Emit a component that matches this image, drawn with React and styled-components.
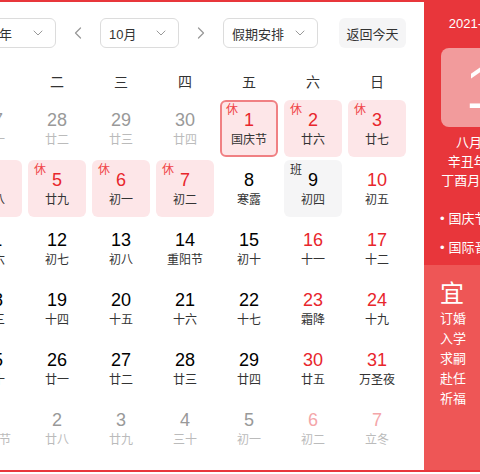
import React from 'react';
import styled, { createGlobalStyle } from 'styled-components';
import { ChevronDown, ChevronLeft, ChevronRight } from 'lucide-react';

const GlobalStyle = createGlobalStyle`
  html, body { margin: 0; padding: 0; background: #fff; }
  body { font-family: "Liberation Sans", "Noto Sans CJK SC", sans-serif; }
`;

const RED = '#e8363b';
const RED_LIGHT = '#ee5656';

const Viewport = styled.div`
  width: 480px;
  height: 474px;
  overflow: hidden;
  background: #fff;
`;

const Widget = styled.div`
  display: flex;
  width: max-content;
  margin-left: -56px;
  border: 2px solid ${RED};
  border-right: none;
  background: #fff;
`;

const Main = styled.div`
  width: 478px;
  height: 468px;
  box-sizing: border-box;
  padding: 16px 15px 0;
`;

const Header = styled.div`
  display: flex;
  align-items: center;
  height: 30px;
`;

const Select = styled.div`
  display: flex;
  align-items: center;
  justify-content: space-between;
  box-sizing: border-box;
  width: ${p => p.$w}px;
  height: 30px;
  padding: 0 9px 0 8px;
  border: 1px solid #dcdcdc;
  border-radius: 6px;
  font-size: 13px;
  color: #333;
  svg { color: #999; }
`;

const Arrow = styled.div`
  display: flex;
  align-items: center;
  justify-content: center;
  width: 44px;
  height: 30px;
  color: #999;
`;

const TodayButton = styled.div`
  margin-left: auto;
  margin-right: 3px;
  height: 30px;
  width: 67px;
  display: flex;
  align-items: center;
  justify-content: center;
  background: #f5f5f6;
  border-radius: 6px;
  font-size: 13px;
  color: #333;
`;

const Weekdays = styled.div`
  display: grid;
  grid-template-columns: repeat(7, 64px);
  margin-top: 18px;
  height: 30px;
  align-items: center;
  font-size: 14px;
  color: #333;
  text-align: center;
`;

const Grid = styled.div`
  display: grid;
  grid-template-columns: repeat(7, 58px);
  grid-auto-rows: 57px;
  column-gap: 6px;
  row-gap: 3px;
  padding: 0 3px;
  margin-top: 4px;
`;

const Cell = styled.div`
  position: relative;
  box-sizing: border-box;
  display: flex;
  flex-direction: column;
  align-items: center;
  padding-top: ${p => (p.$today ? 8 : 10)}px;
  border-radius: 6px;
  background: ${p => (p.$kind === 'rest' ? '#fde6e8' : p.$kind === 'work' ? '#f5f5f6' : 'transparent')};
  border: ${p => (p.$today ? '2px solid #f08083' : 'none')};
`;

const numColor = {
  normal: '#000',
  red: '#e8262c',
  prev: '#999',
  nextWe: '#f4a6a9',
};

const Num = styled.div`
  font-size: 18px;
  line-height: 20px;
  color: ${p => numColor[p.$tone]};
`;

const Lunar = styled.div`
  margin-top: 2px;
  font-size: 12px;
  line-height: 16px;
  color: ${p => (p.$faded ? '#bbb' : '#333')};
  white-space: nowrap;
`;

const Tag = styled.span`
  position: absolute;
  top: ${p => (p.$today ? 1 : 3)}px;
  left: ${p => (p.$today ? 4 : 6)}px;
  font-size: 12px;
  line-height: 14px;
  color: ${p => (p.$work ? '#333' : '#f04447')};
`;

const Side = styled.div`
  width: 116px;
  display: flex;
  flex-direction: column;
  color: #fff;
`;

const SideTop = styled.div`
  background: ${RED};
  height: 263px;
  padding-top: 13px;
  box-sizing: border-box;
  text-align: center;
  font-size: 13px;
`;

const DateLine = styled.div`
  line-height: 18px;
  font-size: 13px;
`;

const DayBox = styled.div`
  width: 82px;
  height: 79px;
  margin: 15px auto 6px;
  background: #f29b9c;
  border-radius: 8px;
  display: flex;
  align-items: center;
  justify-content: center;
  font-size: 60px;
  color: #fff;
`;

const InfoLine = styled.div`
  line-height: 19px;
  white-space: nowrap;
`;

const Festivals = styled.ul`
  list-style: none;
  margin: 14px 0 0;
  padding: 0 0 0 16px;
  text-align: left;
  li {
    line-height: 29px;
    white-space: nowrap;
  }
  li::before {
    content: '•';
    margin-right: 4px;
  }
`;

const SideBottom = styled.div`
  flex: 1;
  background: ${RED_LIGHT};
  padding: 14px 0 0 16px;
  display: flex;
  gap: 30px;
`;

const Almanac = styled.div`
  display: flex;
  flex-direction: column;
  font-size: 13px;
  line-height: 20px;
  b {
    font-size: 24px;
    font-weight: normal;
    line-height: 30px;
  }
`;

const rest = 'rest';
const cells = [
  { d: 27, l: '廿一', t: 'prev' }, { d: 28, l: '廿二', t: 'prev' }, { d: 29, l: '廿三', t: 'prev' },
  { d: 30, l: '廿四', t: 'prev' }, { d: 1, l: '国庆节', t: 'red', k: rest, today: true },
  { d: 2, l: '廿六', t: 'red', k: rest }, { d: 3, l: '廿七', t: 'red', k: rest },
  { d: 4, l: '廿八', t: 'red', k: rest }, { d: 5, l: '廿九', t: 'red', k: rest },
  { d: 6, l: '初一', t: 'red', k: rest }, { d: 7, l: '初二', t: 'red', k: rest },
  { d: 8, l: '寒露', t: 'normal' }, { d: 9, l: '初四', t: 'normal', k: 'work' }, { d: 10, l: '初五', t: 'red' },
  { d: 11, l: '初六', t: 'normal' }, { d: 12, l: '初七', t: 'normal' }, { d: 13, l: '初八', t: 'normal' },
  { d: 14, l: '重阳节', t: 'normal' }, { d: 15, l: '初十', t: 'normal' }, { d: 16, l: '十一', t: 'red' },
  { d: 17, l: '十二', t: 'red' },
  { d: 18, l: '十三', t: 'normal' }, { d: 19, l: '十四', t: 'normal' }, { d: 20, l: '十五', t: 'normal' },
  { d: 21, l: '十六', t: 'normal' }, { d: 22, l: '十七', t: 'normal' }, { d: 23, l: '霜降', t: 'red' },
  { d: 24, l: '十九', t: 'red' },
  { d: 25, l: '二十', t: 'normal' }, { d: 26, l: '廿一', t: 'normal' }, { d: 27, l: '廿二', t: 'normal' },
  { d: 28, l: '廿三', t: 'normal' }, { d: 29, l: '廿四', t: 'normal' }, { d: 30, l: '廿五', t: 'red' },
  { d: 31, l: '万圣夜', t: 'red' },
  { d: 1, l: '万圣节', t: 'prev' }, { d: 2, l: '廿八', t: 'prev' }, { d: 3, l: '廿九', t: 'prev' },
  { d: 4, l: '三十', t: 'prev' }, { d: 5, l: '初一', t: 'prev' }, { d: 6, l: '初二', t: 'nextWe' },
  { d: 7, l: '立冬', t: 'nextWe' },
];

const weekdays = ['一', '二', '三', '四', '五', '六', '日'];

export default function App() {
  return (
    <Viewport>
      <GlobalStyle />
      <Widget>
        <Main>
          <Header>
            <Select $w={95}>
              <span>2021年</span>
              <ChevronDown size={16} strokeWidth={1.5} />
            </Select>
            <Arrow><ChevronLeft size={20} strokeWidth={1.5} /></Arrow>
            <Select $w={79}>
              <span>10月</span>
              <ChevronDown size={16} strokeWidth={1.5} />
            </Select>
            <Arrow><ChevronRight size={20} strokeWidth={1.5} /></Arrow>
            <Select $w={95}>
              <span>假期安排</span>
              <ChevronDown size={16} strokeWidth={1.5} />
            </Select>
            <TodayButton>返回今天</TodayButton>
          </Header>
          <Weekdays>
            {weekdays.map(w => <div key={w}>{w}</div>)}
          </Weekdays>
          <Grid>
            {cells.map((c, i) => (
              <Cell key={i} $kind={c.k} $today={c.today}>
                {c.k === rest && <Tag $today={c.today}>休</Tag>}
                {c.k === 'work' && <Tag $work>班</Tag>}
                <Num $tone={c.t}>{c.d}</Num>
                <Lunar $faded={c.t === 'prev' || c.t === 'nextWe'}>{c.l}</Lunar>
              </Cell>
            ))}
          </Grid>
        </Main>
        <Side>
          <SideTop>
            <DateLine>2021-10-01</DateLine>
            <DayBox>1</DayBox>
            <InfoLine>八月廿五</InfoLine>
            <InfoLine>辛丑年 牛年</InfoLine>
            <InfoLine>丁酉月 壬午日</InfoLine>
            <Festivals>
              <li>国庆节</li>
              <li>国际音乐节</li>
            </Festivals>
          </SideTop>
          <SideBottom>
            <Almanac>
              <b>宜</b>
              <span>订婚</span>
              <span>入学</span>
              <span>求嗣</span>
              <span>赴任</span>
              <span>祈福</span>
            </Almanac>
            <Almanac>
              <b>忌</b>
              <span>开市</span>
              <span>安葬</span>
            </Almanac>
          </SideBottom>
        </Side>
      </Widget>
    </Viewport>
  );
}
